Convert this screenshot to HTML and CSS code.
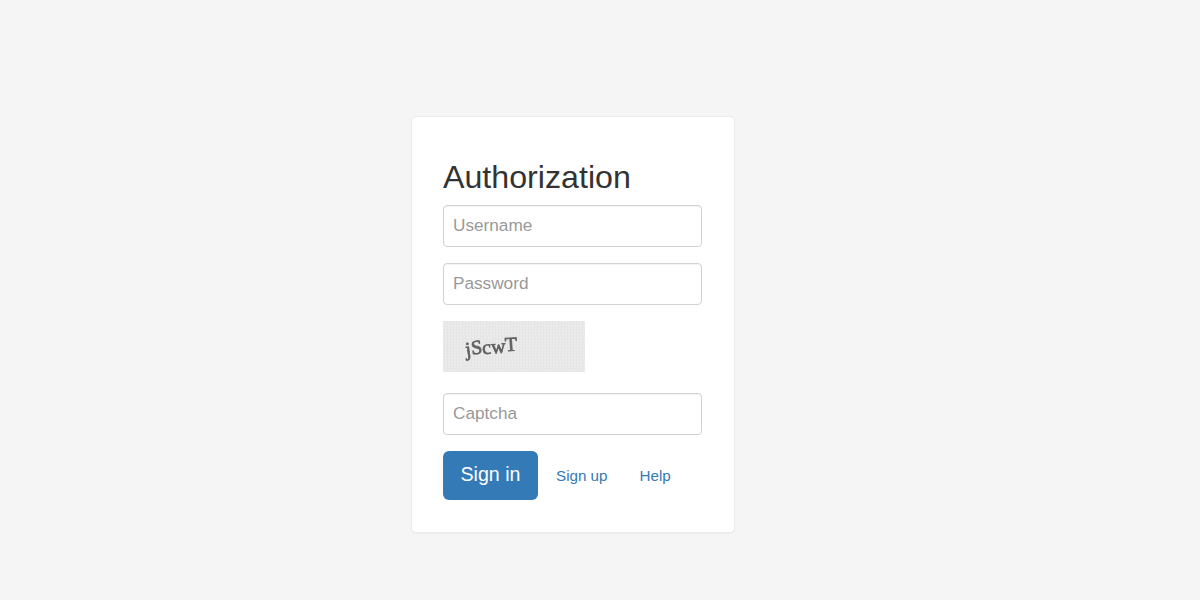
FILE: index.html
```html
<!DOCTYPE html>
<html>
<head>
	<meta name="viewport" content="width=device-width, initial-scale=1">
	<title>Authorization</title>
	<link rel="stylesheet" href="styles.css">
</head>
<body>

<form class="login-card">
	<h2 class="login-title">Authorization</h2>
	<input class="field" type="text" placeholder="Username">
	<input class="field" type="password" placeholder="Password">

	<div class="captcha">
		<span class="captcha-text">
			<span class="ch ch-1">j</span><span class="ch ch-2">S</span><span class="ch ch-3">c</span><span class="ch ch-4">w</span><span class="ch ch-5">T</span>
		</span>
	</div>
	<input class="field" type="text" placeholder="Captcha">

	<div class="actions">
		<button class="btn-primary" type="button">Sign in</button>
		<a class="link" href="#">Sign up</a>
		<a class="link" href="#">Help</a>
	</div>
</form>

</body>
</html>
```
FILE: styles.css
```css
* {
	box-sizing: border-box;
}

body {
	margin: 0;
	height: 600px;
	overflow: hidden;
	font-family: "Liberation Sans", Arial, sans-serif;
	color: #333;
	background: #f5f5f5;
}

.login-card {
	width: 324px;
	height: 416.5px;
	margin: 116px 0 0 410.5px;
	padding: 40px 31.5px 0;
	background: #fff;
	border: 1px solid #ebebeb;
	border-radius: 5px;
	box-shadow: 0 1px 2px rgba(0, 0, 0, .04);
}

.login-title {
	margin: 0 0 7px;
	font-size: 32.2px;
	font-weight: 500;
	line-height: 41px;
}

.field {
	display: block;
	width: 259px;
	height: 42px;
	margin: 0 0 16px;
	padding: 0 9px 2px;
	font-family: inherit;
	font-size: 17.2px;
	color: #555;
	background: #fff;
	border: 1px solid #d2d2d2;
	border-radius: 4px;
	box-shadow: inset 0 1px 1px rgba(0, 0, 0, .05);
}

.field::placeholder {
	color: #999;
	opacity: 1;
}

/* Captcha picture: dithered grey with skewed letters */
.captcha {
	display: flex;
	align-items: center;
	width: 142px;
	height: 51px;
	margin-bottom: 21px;
	padding: 0 0 0 22px;
	background-color: #ececec;
	background-image: conic-gradient(#e5e5e5 25%, transparent 0 50%, #e5e5e5 0 75%, transparent 0);
	background-size: 3px 3px;
}

.captcha-text {
	display: flex;
	align-items: center;
	font-family: "Liberation Serif", serif;
	font-size: 20px;
	color: #606060;
	-webkit-text-stroke: .7px #606060;
	filter: blur(.5px);
}

.ch {
	display: block;
}

.ch-1 {
	transform: rotate(-8deg) translateY(3px);
}

.ch-2 {
	transform: rotate(-6deg) translateY(1px);
}

.ch-3 {
	transform: rotate(-4deg) translateY(1px);
}

.ch-4 {
	transform: rotate(-4deg);
}

.ch-5 {
	transform: rotate(-3deg) translateY(-2px);
}

.actions {
	display: flex;
	align-items: center;
}

.btn-primary {
	width: 95px;
	height: 49px;
	padding: 0 0 2px;
	font-family: inherit;
	font-size: 19.6px;
	color: #fff;
	background: #337ab7;
	border: 0;
	border-radius: 6px;
}

.link {
	margin-left: 18px;
	font-size: 15.2px;
	color: #337ab7;
	text-decoration: none;
}

.link + .link {
	margin-left: 32px;
}
```
